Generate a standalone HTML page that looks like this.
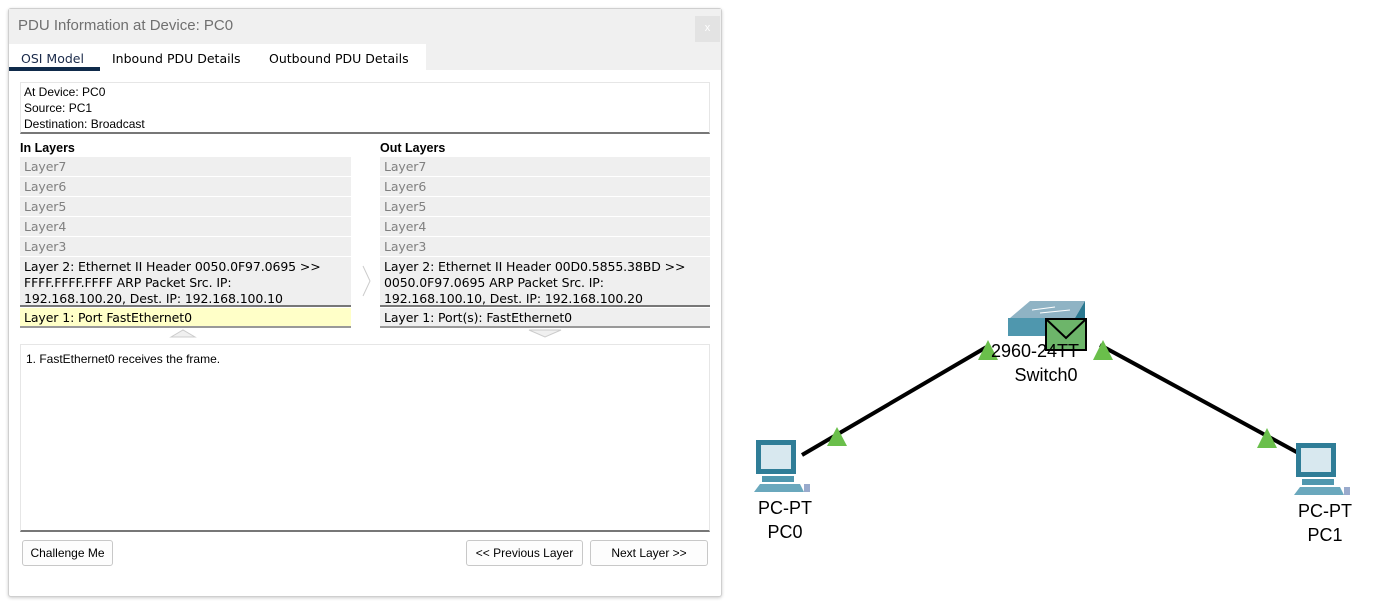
<!DOCTYPE html>
<html><head><meta charset="utf-8"><style>
*{margin:0;padding:0;box-sizing:border-box}
body{width:1392px;height:602px;background:#fff;position:relative;overflow:hidden;font-family:"Liberation Sans",Arial,sans-serif}
.a{position:absolute}
.dlg{left:8px;top:8px;width:714px;height:589px;background:#fff;border:1px solid #cfcfcf;border-radius:3px;box-shadow:0 1px 3px rgba(0,0,0,.2)}
.t{font-size:12px;color:#000}
.row{position:absolute;height:19px;background:#efefef;font-family:"DejaVu Sans",sans-serif;font-size:12.5px;color:#808080;padding:2px 4px;line-height:15px;letter-spacing:-0.1px}
.dk{color:#000}
.btn{position:absolute;top:540px;height:26px;border:1px solid #c8c8c8;border-radius:3px;background:#fdfdfd;font-size:12px;text-align:center;line-height:24px}
</style></head><body>
<div class="a dlg"></div>
<div class="a" style="left:9px;top:9px;width:712px;height:35px;background:#f0f0f0"></div>
<div class="a" style="left:18px;top:17px;font-size:15px;color:#707070">PDU Information at Device: PC0</div>
<div class="a" style="left:695px;top:16px;width:25px;height:26px;background:#e3e3e3;color:#fff;font-size:11px;text-align:center;line-height:24px">x</div>
<div class="a" style="left:426px;top:44px;width:295px;height:26px;background:#f0f0f0"></div>
<div class="a" style="left:21px;top:51px;font-family:'DejaVu Sans',sans-serif;font-size:12.5px;color:#1a2a4a">OSI Model</div>
<div class="a" style="left:112px;top:51px;font-family:'DejaVu Sans',sans-serif;font-size:12.5px">Inbound PDU Details</div>
<div class="a" style="left:269px;top:51px;font-family:'DejaVu Sans',sans-serif;font-size:12.5px">Outbound PDU Details</div>
<div class="a" style="left:9px;top:67px;width:91px;height:4px;background:#0f2a4a"></div>
<div class="a" style="left:20px;top:82px;width:690px;height:52px;border:1px solid #e6e6e6;border-bottom:2px solid #777"></div>
<div class="a t" style="left:24px;top:84px;line-height:16px">At Device: PC0<br>Source: PC1<br>Destination: Broadcast</div>
<div class="a" style="left:20px;top:141px;font-size:12.5px;font-weight:bold">In Layers</div>
<div class="a" style="left:380px;top:141px;font-size:12.5px;font-weight:bold">Out Layers</div>

<div class="row" style="left:20px;top:157px;width:331px">Layer7</div>
<div class="row" style="left:20px;top:177px;width:331px">Layer6</div>
<div class="row" style="left:20px;top:197px;width:331px">Layer5</div>
<div class="row" style="left:20px;top:217px;width:331px">Layer4</div>
<div class="row" style="left:20px;top:237px;width:331px">Layer3</div>
<div class="row dk" style="left:20px;top:257px;width:331px;height:50px;line-height:16px;padding-top:2px;border-bottom:2px solid #777;white-space:nowrap">Layer 2: Ethernet II Header 0050.0F97.0695 &gt;&gt;<br>FFFF.FFFF.FFFF ARP Packet Src. IP:<br>192.168.100.20, Dest. IP: 192.168.100.10</div>
<div class="row dk" style="left:20px;top:308px;width:331px;height:20px;background:#ffffc8;border-bottom:2px solid #999">Layer 1: Port FastEthernet0</div>

<div class="row" style="left:380px;top:157px;width:330px">Layer7</div>
<div class="row" style="left:380px;top:177px;width:330px">Layer6</div>
<div class="row" style="left:380px;top:197px;width:330px">Layer5</div>
<div class="row" style="left:380px;top:217px;width:330px">Layer4</div>
<div class="row" style="left:380px;top:237px;width:330px">Layer3</div>
<div class="row dk" style="left:380px;top:257px;width:330px;height:50px;line-height:16px;padding-top:2px;border-bottom:2px solid #777;white-space:nowrap">Layer 2: Ethernet II Header 00D0.5855.38BD &gt;&gt;<br>0050.0F97.0695 ARP Packet Src. IP:<br>192.168.100.10, Dest. IP: 192.168.100.20</div>
<div class="row dk" style="left:380px;top:308px;width:330px;height:20px;border-bottom:2px solid #999">Layer 1: Port(s): FastEthernet0</div>

<svg class="a" style="left:0;top:0" width="730" height="345">
<polyline points="363,266 370,281 363,296" fill="none" stroke="#ccc"/>
<polygon points="171,337 183,330 195,337" fill="#f0f0f0" stroke="#ccc"/>
<polygon points="529,330 545,337 561,330" fill="#f0f0f0" stroke="#ccc"/>
</svg>

<div class="a" style="left:20px;top:344px;width:690px;height:188px;border:1px solid #e6e6e6;border-bottom:2px solid #777"></div>
<div class="a t" style="left:26px;top:352px">1. FastEthernet0 receives the frame.</div>
<div class="btn" style="left:22px;width:91px">Challenge Me</div>
<div class="btn" style="left:466px;width:117px">&lt;&lt; Previous Layer</div>
<div class="btn" style="left:590px;width:118px">Next Layer &gt;&gt;</div>

<svg class="a" style="left:740px;top:290px" width="652" height="312">
<line x1="62" y1="165" x2="250" y2="55" stroke="#000" stroke-width="4"/>
<line x1="360" y1="55" x2="562" y2="165" stroke="#000" stroke-width="4"/>
<polygon points="97,137 87,156 107,156" fill="#6abf4b"/>
<polygon points="248,50 238,70 258,70" fill="#6abf4b"/>
<polygon points="363,50 353,70 373,70" fill="#6abf4b"/>
<polygon points="527,138 517,158 537,158" fill="#6abf4b"/>
<polygon points="270,28 290,11 345,11 335,28" fill="#8fb3c4"/>
<polygon points="268,28 335,28 335,46 268,46" fill="#4f97ae"/>
<polygon points="335,28 345,11 345,30 335,46" fill="#2a7890"/>
<line x1="292" y1="20" x2="315" y2="17" stroke="#fff" stroke-width="1"/>
<line x1="300" y1="23" x2="330" y2="20" stroke="#fff" stroke-width="1"/>
<rect x="306" y="29" width="40" height="31" fill="#6db56a" stroke="#000" stroke-width="2"/>
<polyline points="306,29 326,48 346,29" fill="none" stroke="#000" stroke-width="2"/>
<text x="295" y="67" font-family="Liberation Sans,Arial" font-size="18" text-anchor="middle">2960-24TT</text>
<text x="306" y="91" font-family="Liberation Sans,Arial" font-size="18" text-anchor="middle">Switch0</text>
<g transform="translate(12,150)">
<rect x="4" y="0" width="40" height="34" fill="#2f7d97"/>
<rect x="9" y="5" width="30" height="24" fill="#d8e8ef"/>
<rect x="10" y="36" width="32" height="6" fill="#4f97ae"/>
<polygon points="2,52 8,44 48,44 52,52" fill="#6aa8bd"/>
<rect x="52" y="44" width="6" height="8" fill="#9ac"/>
</g>
<text x="45" y="224" font-family="Liberation Sans,Arial" font-size="18" text-anchor="middle">PC-PT</text>
<text x="45" y="248" font-family="Liberation Sans,Arial" font-size="18" text-anchor="middle">PC0</text>
<g transform="translate(552,153)">
<rect x="4" y="0" width="40" height="34" fill="#2f7d97"/>
<rect x="9" y="5" width="30" height="24" fill="#d8e8ef"/>
<rect x="10" y="36" width="32" height="6" fill="#4f97ae"/>
<polygon points="2,52 8,44 48,44 52,52" fill="#6aa8bd"/>
<rect x="52" y="44" width="6" height="8" fill="#9ac"/>
</g>
<text x="585" y="227" font-family="Liberation Sans,Arial" font-size="18" text-anchor="middle">PC-PT</text>
<text x="585" y="251" font-family="Liberation Sans,Arial" font-size="18" text-anchor="middle">PC1</text>
</svg>
</body></html>
